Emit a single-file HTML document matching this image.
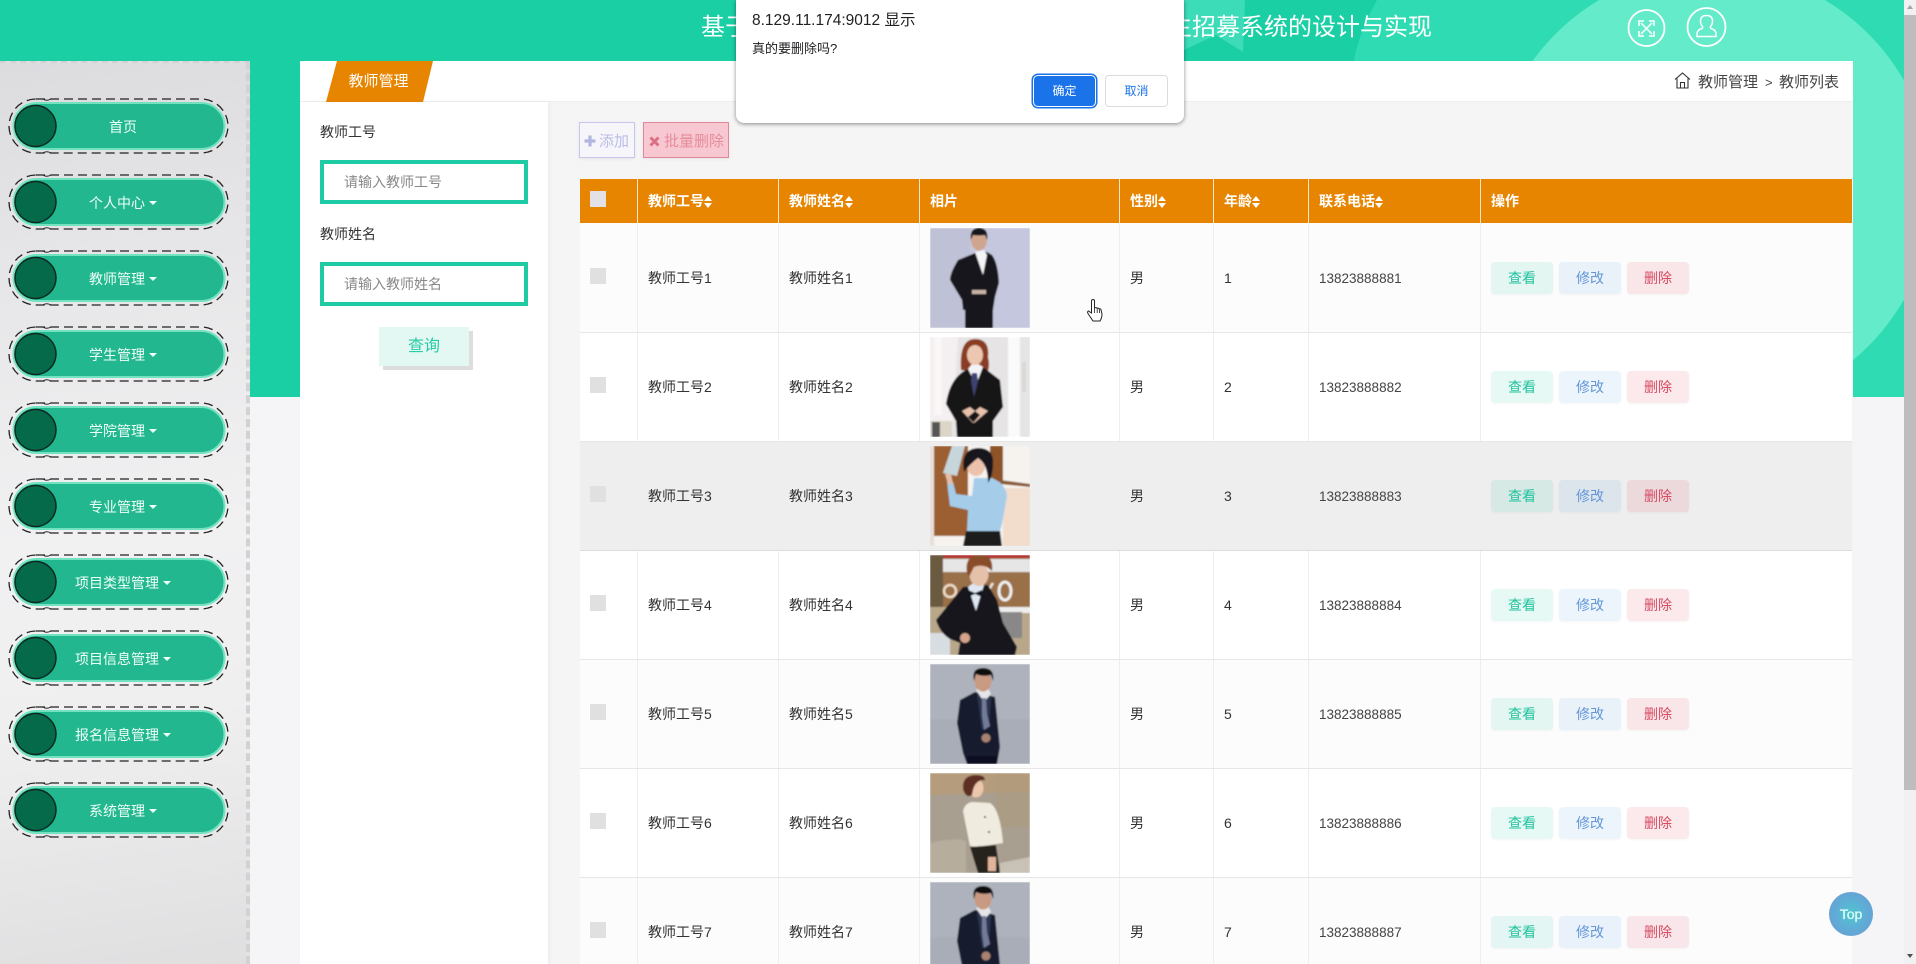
<!DOCTYPE html>
<html lang="zh">
<head>
<meta charset="utf-8">
<title>教师管理</title>
<style>
*{box-sizing:border-box;margin:0;padding:0}
html,body{width:1916px;height:964px;overflow:hidden;background:#f5f5f7;font-family:"Liberation Sans","Noto Sans CJK SC",sans-serif;font-size:14px;color:#333}
#root{position:relative;width:1916px;height:964px;overflow:hidden;background:#f5f5f7}
.a{position:absolute}
#hdr{left:0;top:0;width:1904px;height:397px;overflow:hidden;background:#1bcfa4}
#side{left:0;top:61px;width:250px;height:903px;background:linear-gradient(172deg,#dcdcdf 0%,#e6e6e8 22%,#f1f1f2 52%,#efeff0 72%,#dfdfe0 100%);border-right:4px dashed #d2d2d2;border-top:2px dashed #d2d2d2}
.nav{position:absolute;left:0;width:246px;height:60px;color:#effffa;font-size:14px}
.nav svg{position:absolute;left:0;top:0}
.nav span{position:absolute;left:56px;width:134px;top:18px;line-height:22px;text-align:center;white-space:nowrap}
.nav i{display:inline-block;width:0;height:0;border-left:4px solid transparent;border-right:4px solid transparent;border-top:4.500px solid #effffa;margin-left:4px;vertical-align:3px}
#card{left:300px;top:61px;width:1553px;height:903px;background:#f5f5f6}
#top{left:300px;top:61px;width:1553px;height:41px;background:#fff;border-bottom:1px solid #eee}
#left{left:300px;top:102px;width:248px;height:862px;background:#fff;box-shadow:2px 0 4px rgba(0,0,0,.04)}
.lab{position:absolute;left:320px;font-size:14px;line-height:20px;color:#333}
.inp{position:absolute;left:320px;width:208px;height:44px;border:4px solid #1fcba5;background:#fff;color:#888;font-size:14px;line-height:36px;padding-left:20px}
.th{position:absolute;top:179px;height:44px;line-height:44px;color:#fff;font-weight:bold;font-size:14px;white-space:nowrap}
.sep{position:absolute;width:1px;top:179px;height:44px;background:#fbe6c8}
.s{display:inline-block;width:8px;height:12px;position:relative;vertical-align:-2px}
.s:before,.s:after{content:"";position:absolute;left:0;border-left:4px solid transparent;border-right:4px solid transparent}
.s:before{top:0;border-bottom:5.500px solid #fff}
.s:after{bottom:0;border-top:5.500px solid #fff}
.row{position:absolute;left:580px;width:1272px;height:109px;overflow:hidden}
.row>div{position:absolute;top:0;height:108px;line-height:110px;white-space:nowrap}
.row .v{top:0;width:1px;background:#eee;height:109px}
.row .t{line-height:111px;font-size:13.500px;color:#444}
.ln{position:absolute;left:580px;width:1272px;height:1px;background:#e6e6e6}
.cb{top:45px!important;left:10px;width:16px;height:16px!important;background:#e0e0e0}
.ph{top:5px!important;left:350px;width:100px;height:100px!important;overflow:hidden}
.btn{top:39px!important;width:62px;height:32px!important;line-height:32px!important;text-align:center;border-radius:4px;box-shadow:0 1px 2px rgba(0,0,0,.04)}
.b1{left:911px;background:rgba(31,204,166,.11);color:#22c39e}
.b2{left:979px;background:rgba(80,160,225,.11);color:#6496d8}
.b3{left:1047px;background:rgba(220,53,85,.11);color:#d84a62}
#dlg{left:736px;top:0;width:448px;height:123px;background:#fff;border-radius:0 0 8px 8px;box-shadow:0 1px 4px rgba(0,0,0,.45)}
</style>
</head>
<body>
<div id="root">

<svg width="0" height="0" style="position:absolute">
<defs>
<filter id="bl"><feGaussianBlur stdDeviation="0.9"/></filter>
<symbol id="pill" viewBox="0 0 246 60">
<rect x="13.500" y="5" width="211" height="46" rx="23" fill="#22b78e" stroke="#74e2c1" stroke-width="2"/>
<circle cx="35.500" cy="28" r="20.500" fill="#046a4a" stroke="#0c2a20" stroke-width="1.500"/>
<rect x="9" y="1" width="219" height="54" rx="27" fill="none" stroke="#222" stroke-width="1.300" stroke-dasharray="9 5"/>
<path d="M43 1q3.500 2.500 8 0M43 55q3.500 -2.500 8 0" fill="none" stroke="#222" stroke-width="1"/>
</symbol>
<symbol id="man2" viewBox="0 0 100 100">
<rect width="100" height="100" fill="#a9adb8"/>
<rect x="0" y="0" width="100" height="55" fill="#aeb2bc"/>
<path d="M37 100L33 89 27 59 30 36 45 28 65 33 70 83 67 100Z" fill="#141b2e"/>
<path d="M47 30L55 28 61 34 59 62 52 66Z" fill="#2b3550"/>
<path d="M46 26L54 38 61 30 58 24H50Z" fill="#e6e6ea"/>
<path d="M52 34l4 0 1 16 3 12-6 4-2-14Z" fill="#737a96"/>
<rect x="37" y="92" width="30" height="8" fill="#0c1020"/>
<ellipse cx="53" cy="17" rx="8.500" ry="10.500" fill="#c99a82"/>
<path d="M44 17Q41 4 53 4 65 4 63 17L61 11Q52 13 46 10Z" fill="#111"/>
<ellipse cx="56" cy="74" rx="4.500" ry="4.500" fill="#a98270"/>
</symbol>
</defs>
</svg>

<!-- header and teal backdrop -->
<div id="hdr" class="a">
<svg width="1904" height="397" style="position:absolute;left:0;top:0">
<path d="M1377 0Q1358 35 1354 61L1300 397H1904V0Z" fill="#2fdbb3"/>
<path d="M1184 0H1245L1243 52 1216 35 1184 50Z" fill="#3cdcb9"/>
<circle cx="1712" cy="190" r="221" fill="#64ebc9"/>
</svg>
<div class="a" style="left:701px;top:12px;font-size:24px;line-height:32px;color:#fff;white-space:nowrap">基于</div>
<div class="a" style="left:1168px;top:12px;width:270px;font-size:24px;line-height:32px;color:#fff;white-space:nowrap">生招募系统的设计与实现</div>
<svg width="110" height="46" viewBox="0 0 110 46" style="position:absolute;left:1622px;top:4px" fill="none" stroke="#fff">
<circle cx="24.500" cy="24" r="18" stroke-width="1.800"/>
<circle cx="84.500" cy="23" r="19" stroke-width="1.800"/>
<path d="M19 19l11 11M30 19L19 30M17 22v-5h5M32 22v-5h-5M17 27v5h5M32 27v5h-5" stroke-width="1.800" opacity=".85"/>
<path d="M75 30q0-4 5-5.500 1-.6 .5-2-2-2-2-5.500 0-5.500 6-5.500t6 5.500q0 3.500-2 5.500-.5 1.400.5 2 5 1.500 5 5.500v2.500H75Z" stroke-width="1.500"/>
</svg>
</div>

<!-- sidebar -->
<div id="side" class="a"></div>
<div class="nav" style="top:98px"><svg width="246" height="60"><use href="#pill"/></svg><span>首页</span></div>
<div class="nav" style="top:174px"><svg width="246" height="60"><use href="#pill"/></svg><span>个人中心<i></i></span></div>
<div class="nav" style="top:250px"><svg width="246" height="60"><use href="#pill"/></svg><span>教师管理<i></i></span></div>
<div class="nav" style="top:326px"><svg width="246" height="60"><use href="#pill"/></svg><span>学生管理<i></i></span></div>
<div class="nav" style="top:402px"><svg width="246" height="60"><use href="#pill"/></svg><span>学院管理<i></i></span></div>
<div class="nav" style="top:478px"><svg width="246" height="60"><use href="#pill"/></svg><span>专业管理<i></i></span></div>
<div class="nav" style="top:554px"><svg width="246" height="60"><use href="#pill"/></svg><span>项目类型管理<i></i></span></div>
<div class="nav" style="top:630px"><svg width="246" height="60"><use href="#pill"/></svg><span>项目信息管理<i></i></span></div>
<div class="nav" style="top:706px"><svg width="246" height="60"><use href="#pill"/></svg><span>报名信息管理<i></i></span></div>
<div class="nav" style="top:782px"><svg width="246" height="60"><use href="#pill"/></svg><span>系统管理<i></i></span></div>

<!-- main card -->
<div id="card" class="a"></div>
<div id="top" class="a"></div>
<svg class="a" style="left:326px;top:61px" width="108" height="41"><path d="M11 0H107L97 41H0Z" fill="#e88500"/></svg>
<div class="a" style="left:325px;top:61px;width:107px;height:41px;line-height:41px;text-align:center;color:#fff;font-size:15px;font-weight:normal">教师管理</div>

<svg class="a" style="left:1674px;top:72px" width="17" height="17" viewBox="0 0 17 17" fill="none" stroke="#333" stroke-width="1.100"><path d="M1 7.500L8.500 1 16 7.500M3 6.500V16H14V6.500M6.500 16v-5.500h4V16M3 16h11"/></svg>
<div class="a" style="left:1698px;top:72px;line-height:22px;font-size:15px;color:#444;white-space:nowrap">教师管理</div>
<div class="a" style="left:1765px;top:72px;line-height:22px;font-size:13px;color:#444">&gt;</div>
<div class="a" style="left:1779px;top:72px;line-height:22px;font-size:15px;color:#444;white-space:nowrap">教师列表</div>

<!-- search panel -->
<div id="left" class="a"></div>
<div class="lab" style="top:122px">教师工号</div>
<div class="inp" style="top:160px">请输入教师工号</div>
<div class="lab" style="top:224px">教师姓名</div>
<div class="inp" style="top:262px">请输入教师姓名</div>
<div class="a" style="left:379px;top:327px;width:90px;height:39px;line-height:39px;text-align:center;background:#e3f8f2;color:#27cca6;font-size:16px;box-shadow:4px 4px 0 #ddd">查询</div>

<!-- actions -->
<div class="a" style="left:579px;top:122px;width:56px;height:36px;line-height:37px;border:1px solid #c6c6ee;background:#f6f6fa;color:#b9bce6;padding-left:4px;font-size:15px;white-space:nowrap;box-shadow:0 1px 3px rgba(0,0,0,.07)"><svg width="12" height="12" style="vertical-align:-1px;margin-right:3px"><path d="M6 0.500v11M0.500 6h11" stroke="#b1b6e0" stroke-width="3.200"/></svg>添加</div>
<div class="a" style="left:643px;top:122px;width:86px;height:36px;line-height:37px;border:1px solid #e08898;background:#f7c8d1;color:#e78c9c;padding-left:4px;font-size:15px;white-space:nowrap;box-shadow:0 1px 3px rgba(0,0,0,.07)"><svg width="11" height="11" style="vertical-align:-1px;margin-left:1px;margin-right:4px"><path d="M1.500 1.500l8 8M9.500 1.500l-8 8" stroke="#dd6f84" stroke-width="3"/></svg>批量删除</div>

<!-- table head -->
<div class="a" style="left:580px;top:179px;width:1272px;height:44px;background:#e88500"></div>
<div class="a" style="left:590px;top:191px;width:16px;height:16px;background:#e2e2e6"></div>
<div class="sep" style="left:637px"></div><div class="sep" style="left:778px"></div><div class="sep" style="left:919px"></div><div class="sep" style="left:1119px"></div><div class="sep" style="left:1213px"></div><div class="sep" style="left:1308px"></div><div class="sep" style="left:1480px"></div>
<div class="th" style="left:648px">教师工号<span class="s"></span></div>
<div class="th" style="left:789px">教师姓名<span class="s"></span></div>
<div class="th" style="left:930px">相片</div>
<div class="th" style="left:1130px">性别<span class="s"></span></div>
<div class="th" style="left:1224px">年龄<span class="s"></span></div>
<div class="th" style="left:1319px">联系电话<span class="s"></span></div>
<div class="th" style="left:1491px">操作</div>

<!-- rows -->
<div class="row" style="top:223px;background:#fcfcfc">
<div class="v" style="left:57px"></div><div class="v" style="left:198px"></div><div class="v" style="left:339px"></div><div class="v" style="left:539px"></div><div class="v" style="left:633px"></div><div class="v" style="left:728px"></div><div class="v" style="left:900px"></div>
<div class="cb"></div><div style="left:68px">教师工号1</div><div style="left:209px">教师姓名1</div>
<div class="ph"><svg width="100" height="100" viewBox="0 0 100 100"><g filter="url(#bl)"><rect width="100" height="100" fill="#c5c7de"/><rect width="40" height="100" fill="#bfc1d6"/><path d="M28 32Q20 45 20 52L32 72 33 82H35V100H63V82L65 69 69 55Q68 35 62 27L57 24 45 25Z" fill="#14161f"/><path d="M45 24L53 47 57 27 54 22Z" fill="#f4f4f6"/><rect x="42" y="62" width="14" height="4" fill="#c8b4a6"/><ellipse cx="49" cy="12" rx="8" ry="10.500" fill="#d0a58e"/><path d="M41 12Q39 0 49 0 59 0 57 12L55 7Q48 8 43 7Z" fill="#15151a"/></g></svg></div>
<div style="left:550px">男</div><div style="left:644px">1</div><div class="t" style="left:739px">13823888881</div>
<div class="btn b1">查看</div><div class="btn b2">修改</div><div class="btn b3">删除</div>
</div>

<div class="row" style="top:332px;background:#fff">
<div class="v" style="left:57px"></div><div class="v" style="left:198px"></div><div class="v" style="left:339px"></div><div class="v" style="left:539px"></div><div class="v" style="left:633px"></div><div class="v" style="left:728px"></div><div class="v" style="left:900px"></div>
<div class="cb"></div><div style="left:68px">教师工号2</div><div style="left:209px">教师姓名2</div>
<div class="ph"><svg width="100" height="100" viewBox="0 0 100 100"><g filter="url(#bl)"><rect width="100" height="100" fill="#e6e4e4"/><path d="M0 0H28L22 100H0Z" fill="#f4eff0"/><rect x="4" y="0" width="8" height="78" fill="#fbf7f7"/><rect x="78" y="0" width="12" height="100" fill="#fafafa"/><rect x="92" y="25" width="4" height="30" fill="#dcd8d4"/><rect x="0" y="84" width="22" height="16" fill="#dcd6c8"/><rect x="2" y="85" width="8" height="15" fill="#555"/><path d="M31 33Q29 2 45 2 60 2 58 20 60 28 58 34L50 28 40 34Z" fill="#8a3d24"/><path d="M27 100L26 84 16 67Q20 40 38 32L53 30 70 43 73 70 63 84 63 100Z" fill="#131316"/><path d="M38 32L46 48 53 30 48 27H42Z" fill="#f4f4f8"/><path d="M42 36h5l1 8-4 16-3-16Z" fill="#3c4270"/><ellipse cx="45" cy="18" rx="8" ry="10" fill="#ecc7b2"/><path d="M32 74L43 86 50 78 40 70Z M58 74L44 86 38 80 50 70Z" fill="#e8c2ad"/></g></svg></div>
<div style="left:550px">男</div><div style="left:644px">2</div><div class="t" style="left:739px">13823888882</div>
<div class="btn b1">查看</div><div class="btn b2">修改</div><div class="btn b3">删除</div>
</div>

<div class="row" style="top:441px;background:#eeeeee">
<div class="v" style="left:57px"></div><div class="v" style="left:198px"></div><div class="v" style="left:339px"></div><div class="v" style="left:539px"></div><div class="v" style="left:633px"></div><div class="v" style="left:728px"></div><div class="v" style="left:900px"></div>
<div class="cb"></div><div style="left:68px">教师工号3</div><div style="left:209px">教师姓名3</div>
<div class="ph"><svg width="100" height="100" viewBox="0 0 100 100"><g filter="url(#bl)"><rect width="100" height="100" fill="#f6f3ef"/><rect x="4" width="34" height="90" fill="#9c5e30"/><rect x="0" width="4" height="100" fill="#e8e0d8"/><rect x="60" width="13" height="36" fill="#8e5226"/><path d="M70 34l30 4v3L70 38Z" fill="#8b5a36"/><rect x="73" y="42" width="27" height="58" fill="#f2dccb"/><path d="M13 27L22 0H35L27 30Z" fill="#c7d6db"/><path d="M40 100L37 85 38 64 20 60 18 44 17 34 23 36 26 48 42 50 44 32 62 32Q76 38 77 50L72 78 70 85 72 100Z" fill="#a5cdea"/><path d="M33 100l3-15 34 0 2 15Z" fill="#1b1a1e"/><ellipse cx="46" cy="20" rx="9" ry="10" fill="#ecc2ac"/><path d="M34 26Q30 3 48 2 64 2 63 18 63 30 58 37 58 18 48 12 40 18 34 26Z" fill="#17161a"/><path d="M15 28l6 0 2 10-5 0Z" fill="#e5bda7"/></g></svg></div>
<div style="left:550px">男</div><div style="left:644px">3</div><div class="t" style="left:739px">13823888883</div>
<div class="btn b1">查看</div><div class="btn b2">修改</div><div class="btn b3">删除</div>
</div>

<div class="row" style="top:550px;background:#fff">
<div class="v" style="left:57px"></div><div class="v" style="left:198px"></div><div class="v" style="left:339px"></div><div class="v" style="left:539px"></div><div class="v" style="left:633px"></div><div class="v" style="left:728px"></div><div class="v" style="left:900px"></div>
<div class="cb"></div><div style="left:68px">教师工号4</div><div style="left:209px">教师姓名4</div>
<div class="ph"><svg width="100" height="100" viewBox="0 0 100 100"><g filter="url(#bl)"><rect width="100" height="100" fill="#9a7048"/><rect width="100" height="3" fill="#b43030"/><rect y="4" x="13" width="87" height="13" fill="#e6e6e6"/><rect width="13" height="52" fill="#6b5a40"/><rect y="52" width="100" height="48" fill="#b9a78a"/><rect x="68" y="52" width="32" height="6" fill="#eeeeee"/><rect x="70" y="57" width="22" height="26" fill="#888"/><rect x="0" y="78" width="20" height="22" fill="#d8dde2"/><circle cx="20" cy="36" r="6" fill="none" stroke="#ecdcc8" stroke-width="2.500"/><ellipse cx="75" cy="36" rx="6" ry="9" fill="none" stroke="#efefef" stroke-width="3"/><path d="M63 28l-5 8 4 8" fill="none" stroke="#efe6da" stroke-width="2.500"/><path d="M6 65L33 32 58 30 67 45 73 68 87 92 85 100H28L30 88 20 84Q10 78 6 65Z" fill="#16161b"/><path d="M38 32L46 56 54 30 46 26Z" fill="#dfe7f3"/><path d="M38 35l7 3 7-3v7l-7-3-7 3Z" fill="#10121c"/><ellipse cx="49" cy="20" rx="9.500" ry="11" fill="#e6c1aa"/><path d="M37 18Q34 0 50 0 64 0 62 16 54 8 44 12L39 22Z" fill="#8a4d2b"/><circle cx="35" cy="83" r="5" fill="#d4a48c"/></g></svg></div>
<div style="left:550px">男</div><div style="left:644px">4</div><div class="t" style="left:739px">13823888884</div>
<div class="btn b1">查看</div><div class="btn b2">修改</div><div class="btn b3">删除</div>
</div>

<div class="row" style="top:659px;background:#fcfcfc">
<div class="v" style="left:57px"></div><div class="v" style="left:198px"></div><div class="v" style="left:339px"></div><div class="v" style="left:539px"></div><div class="v" style="left:633px"></div><div class="v" style="left:728px"></div><div class="v" style="left:900px"></div>
<div class="cb"></div><div style="left:68px">教师工号5</div><div style="left:209px">教师姓名5</div>
<div class="ph"><svg width="100" height="100" viewBox="0 0 100 100"><g filter="url(#bl)"><use href="#man2" width="100" height="100"/></g></svg></div>
<div style="left:550px">男</div><div style="left:644px">5</div><div class="t" style="left:739px">13823888885</div>
<div class="btn b1">查看</div><div class="btn b2">修改</div><div class="btn b3">删除</div>
</div>

<div class="row" style="top:768px;background:#fff">
<div class="v" style="left:57px"></div><div class="v" style="left:198px"></div><div class="v" style="left:339px"></div><div class="v" style="left:539px"></div><div class="v" style="left:633px"></div><div class="v" style="left:728px"></div><div class="v" style="left:900px"></div>
<div class="cb"></div><div style="left:68px">教师工号6</div><div style="left:209px">教师姓名6</div>
<div class="ph"><svg width="100" height="100" viewBox="0 0 100 100"><g filter="url(#bl)"><rect width="100" height="100" fill="#a89f90"/><path d="M0 0H100V18L60 20 0 22Z" fill="#b59c7c"/><rect x="66" y="0" width="34" height="54" fill="#b09a7a" opacity=".45"/><path d="M0 70Q25 64 36 68V100H0Z" fill="#b6ad9c"/><path d="M70 90l30-6v16H70Z" fill="#c8c2b6"/><path d="M40 73L33 38Q35 30 42 29L60 30Q70 36 73 70L60 72 48 74Z" fill="#efebdf"/><path d="M40 74L66 72 70 100H48Z" fill="#25221f"/><ellipse cx="46" cy="15" rx="7.500" ry="9.500" fill="#ecc7ae"/><path d="M33 16Q32 2 46 2 55 2 55 7 44 6 42 22 36 26 33 16Z" fill="#5d2d20"/><rect x="58" y="84" width="8" height="14" fill="#e0b59c"/><circle cx="55" cy="44" r="1" fill="#222"/><circle cx="59" cy="59" r="1" fill="#222"/></g></svg></div>
<div style="left:550px">男</div><div style="left:644px">6</div><div class="t" style="left:739px">13823888886</div>
<div class="btn b1">查看</div><div class="btn b2">修改</div><div class="btn b3">删除</div>
</div>

<div class="row" style="top:877px;height:87px;background:#fcfcfd">
<div class="v" style="left:57px"></div><div class="v" style="left:198px"></div><div class="v" style="left:339px"></div><div class="v" style="left:539px"></div><div class="v" style="left:633px"></div><div class="v" style="left:728px"></div><div class="v" style="left:900px"></div>
<div class="cb"></div><div style="left:68px">教师工号7</div><div style="left:209px">教师姓名7</div>
<div class="ph"><svg width="100" height="100" viewBox="0 0 100 100"><g filter="url(#bl)"><use href="#man2" width="100" height="100"/></g></svg></div>
<div style="left:550px">男</div><div style="left:644px">7</div><div class="t" style="left:739px">13823888887</div>
<div class="btn b1">查看</div><div class="btn b2">修改</div><div class="btn b3">删除</div>
</div>

<!-- row lines -->
<div class="ln" style="top:332px"></div>
<div class="ln" style="top:441px"></div>
<div class="ln" style="top:550px;background:#dcdcdc"></div>
<div class="ln" style="top:659px"></div>
<div class="ln" style="top:768px"></div>
<div class="ln" style="top:877px"></div>

<!-- cursor -->
<svg class="a" style="left:1086px;top:299px" width="18" height="24" viewBox="0 0 18 24"><path d="M5.500 2q0-1.500 1.500-1.500T8.500 2v7l1-.3q1.300-.2 1.700.6 1.400-.5 1.900.6 1.400-.4 1.900.8L16 15q0 4-2 7H7L2 14.500Q1 12.700 2.400 12l3.100 2Z" fill="#fff" stroke="#222" stroke-width="1"/><path d="M8.500 9v5M11.200 9.500V14M13.500 10.500V14" stroke="#222" stroke-width=".8"/></svg>

<!-- dialog -->
<div id="dlg" class="a"></div>
<div class="a" style="left:752px;top:11px;font-size:15.500px;line-height:20px;color:#202124;white-space:nowrap">8.129.11.174:9012 显示</div>
<div class="a" style="left:752px;top:40px;font-size:13px;line-height:18px;color:#202124;white-space:nowrap">真的要删除吗?</div>
<div class="a" style="left:1034px;top:76px;width:61px;height:30px;line-height:30px;background:#1a73e8;color:#fff;text-align:center;font-size:12px;border-radius:4px;box-shadow:0 0 0 1px #fff,0 0 0 2.500px #1a73e8">确定</div>
<div class="a" style="left:1105px;top:75px;width:63px;height:32px;line-height:30px;background:#fff;border:1px solid #dadce0;color:#1a73e8;text-align:center;font-size:12px;border-radius:4px">取消</div>

<!-- back to top -->
<div class="a" style="left:1829px;top:892px;width:44px;height:44px;border-radius:50%;line-height:44px;text-align:center;color:#d8fbf5;font-size:14px;-webkit-text-stroke:.3px #d8fbf5;background:radial-gradient(circle,#4fc6cf 0%,#5eaed6 45%,#6d98d6 100%)">Top</div>

<!-- scrollbar -->
<div class="a" style="left:1904px;top:0;width:12px;height:964px;background:#f1f1f1"></div>
<div class="a" style="left:1904px;top:15px;width:12px;height:775px;background:#bdbdbd"></div>
<svg class="a" style="left:1904px;top:0" width="12" height="964"><path d="M3 9l3-4 3 4Z" fill="#a3a3a3"/><path d="M3 954l3 4 3-4Z" fill="#505050"/></svg>

</div>
</body>
</html>
